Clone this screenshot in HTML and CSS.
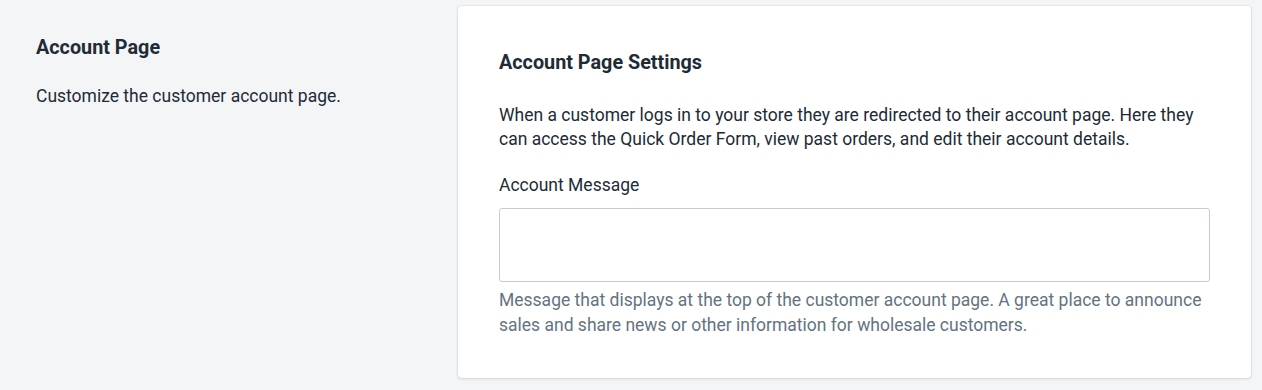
FILE: index.html
```html
<!DOCTYPE html>
<html lang="en">
  <head>
    <meta charset="UTF-8" />
    <meta name="viewport" content="width=device-width, initial-scale=1.0" />
    <title>Account Page</title>
    <link rel="stylesheet" href="styles.css">
  </head>
  <body>
    <div class="section">
      <div class="annotation">
        <h2 class="annotation-title">Account Page</h2>
        <p class="annotation-text">Customize the customer account page.</p>
      </div>

      <div class="card">
        <h3 class="card-title">Account Page Settings</h3>
        <p class="card-text">
          When a customer logs in to your store they are redirected to their account page. Here they
          can access the Quick Order Form, view past orders, and edit their account details.
        </p>

        <label class="field-label" for="account-message">Account Message</label>
        <textarea class="field-input" id="account-message"></textarea>
        <p class="field-help">
          Message that displays at the top of the customer account page. A great place to announce
          sales and share news or other information for wholesale customers.
        </p>
      </div>
    </div>
  </body>
</html>
```

FILE: styles.css
```css
body {
  margin: 0;
  background-color: #f4f5f7;
  color: #212b36;
  font-family: Roboto, "Noto Sans", sans-serif;
  font-size: 17.5px;
  line-height: 24px;
}

.section {
  display: flex;
  align-items: flex-start;
  padding: 6px 11px 12px 36px;
}

.annotation {
  width: 422px;
  flex-shrink: 0;
  padding-top: 30px;
}

.annotation-title {
  margin: 0;
  font-size: 19.8px;
  font-weight: 700;
  line-height: 24px;
}

.annotation-text {
  margin: 24px 0 0;
}

.card {
  flex: 1;
  background-color: #fff;
  border-radius: 4px;
  box-shadow: 0 0 0 1px rgba(63, 63, 68, 0.05), 0 1px 3px 0 rgba(63, 63, 68, 0.15);
  padding: 45px 41px 40px;
}

.card-title {
  margin: 0;
  font-size: 19.8px;
  font-weight: 700;
  line-height: 24px;
}

.card-text {
  margin: 28px 0 0;
}

.field-label {
  display: block;
  margin-top: 22px;
}

.field-input {
  display: block;
  box-sizing: border-box;
  width: 100%;
  height: 74px;
  margin-top: 11px;
  border: 1px solid #c4cdd5;
  border-radius: 3px;
  resize: none;
  font: inherit;
}

.field-help {
  margin: 6px 0 0;
  color: #637381;
  line-height: 25px;
}
```
